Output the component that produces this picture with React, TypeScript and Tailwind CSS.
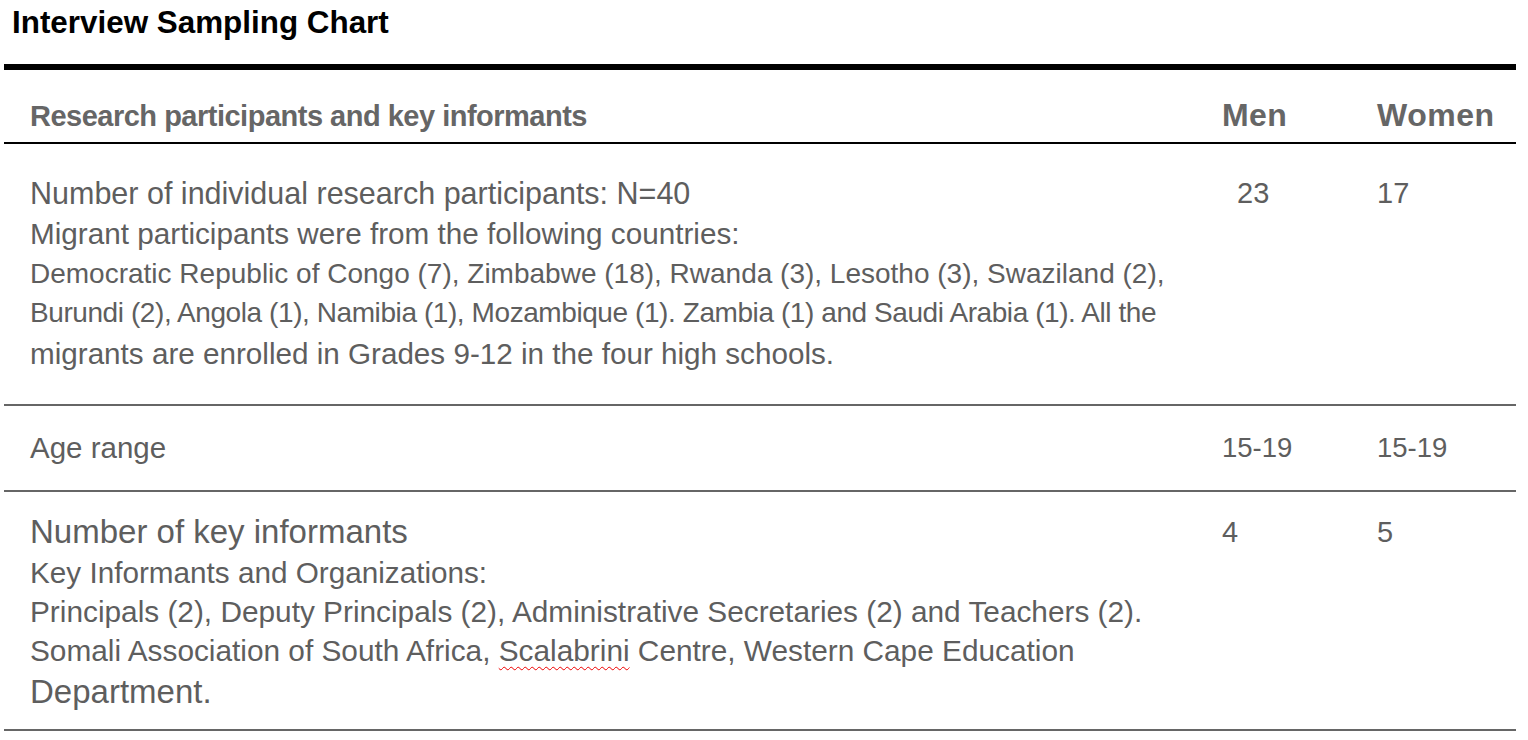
const body = 'text-[#5e5e5e]'

export default function App() {
  return (
    <div className="w-[1528px] h-[740px] bg-white overflow-hidden" style={{ fontFamily: '"Liberation Sans", Arial, sans-serif' }}>
      <h1 className="pl-[12px] pt-[5px] h-[64px] text-[31.4px] font-bold text-black leading-[36px]">Interview Sampling Chart</h1>
      <div className="mx-[4px] w-[1512px] border-t-[6px] border-black">
        {/* header */}
        <div className="flex items-baseline h-[74px] pt-[27px] border-b-2 border-black text-[#666] font-bold leading-[36px]">
          <div className="pl-[26px] w-[1218px] text-[29px] tracking-[-0.5px]">Research participants and key informants</div>
          <div className="w-[155px] text-[32px] tracking-[0.4px]">Men</div>
          <div className="text-[32px] tracking-[0.5px]">Women</div>
        </div>

        {/* participants */}
        <div className={`flex items-start h-[262px] pt-[29px] border-b-2 border-[#666] ${body}`}>
          <div className="pl-[26px] w-[1218px]">
            <p className="text-[30.5px] leading-[40px]">Number of individual research participants: N=40</p>
            <p className="text-[29.7px] leading-[42px]">Migrant participants were from the following countries:</p>
            <p className="text-[28px] leading-[37px]">Democratic Republic of Congo (7), Zimbabwe (18), Rwanda (3), Lesotho (3), Swaziland (2),</p>
            <p className="text-[28px] leading-[41px] tracking-[-0.42px]">Burundi (2), Angola (1), Namibia (1), Mozambique (1). Zambia (1) and Saudi Arabia (1). All the</p>
            <p className="text-[29.65px] leading-[41px]">migrants are enrolled in Grades 9-12 in the four high schools.</p>
          </div>
          <div className="w-[155px] pl-[15px] text-[29px] leading-[40px]">23</div>
          <div className="text-[29px] leading-[40px]">17</div>
        </div>

        {/* age */}
        <div className={`flex items-center h-[86px] border-b-2 border-[#666] text-[29.5px] ${body}`}>
          <div className="pl-[26px] w-[1218px]">Age range</div>
          <div className="w-[155px] text-[27.5px]">15-19</div>
          <div className="text-[27.5px]">15-19</div>
        </div>

        {/* key informants */}
        <div className={`flex items-start h-[239px] pt-[20px] border-b-2 border-[#666] ${body}`}>
          <div className="pl-[26px] w-[1218px]">
            <p className="text-[33px] leading-[40px]">Number of key informants</p>
            <p className="text-[29.7px] leading-[41px]">Key Informants and Organizations:</p>
            <p className="text-[29.8px] leading-[37px]">Principals (2), Deputy Principals (2), Administrative Secretaries (2) and Teachers (2).</p>
            <p className="text-[29.8px] leading-[41px]">
              Somali Association of South Africa,{' '}
              <span className="underline decoration-wavy decoration-[#e00] decoration-1 underline-offset-[5px]">Scalabrini</span>{' '}
              Centre, Western Cape Education
            </p>
            <p className="text-[33px] leading-[41px]">Department.</p>
          </div>
          <div className="w-[155px] text-[29px] leading-[40px]">4</div>
          <div className="text-[29px] leading-[40px]">5</div>
        </div>
      </div>
    </div>
  )
}
